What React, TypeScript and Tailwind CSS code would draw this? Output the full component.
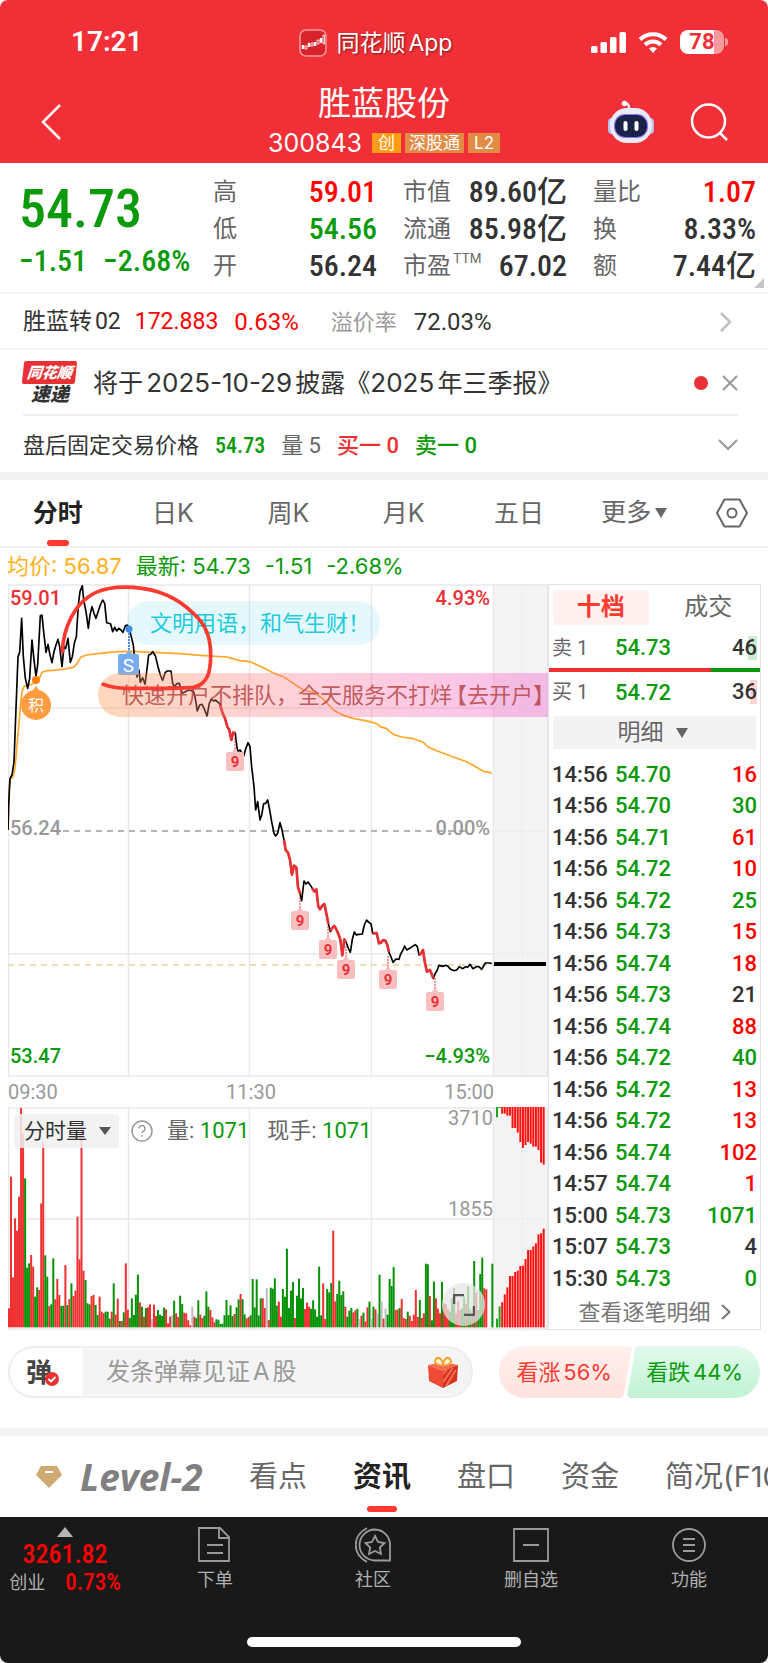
import { ReactNode, useState } from "react";

type Tick = {
  time: string;
  price: string;
  volume: string;
  color: string;
};

type Bar = {
  x: number;
  top: number;
  fill: string;
};

const RED = "text-[#ff0000]";
const GREEN = "text-[#0a9a0a]";
const DARK = "text-[#333333]";

const ticks: Tick[] = [
  { time: "14:56", price: "54.70", volume: "16", color: RED },
  { time: "14:56", price: "54.70", volume: "30", color: GREEN },
  { time: "14:56", price: "54.71", volume: "61", color: RED },
  { time: "14:56", price: "54.72", volume: "10", color: RED },
  { time: "14:56", price: "54.72", volume: "25", color: GREEN },
  { time: "14:56", price: "54.73", volume: "15", color: RED },
  { time: "14:56", price: "54.74", volume: "18", color: RED },
  { time: "14:56", price: "54.73", volume: "21", color: DARK },
  { time: "14:56", price: "54.74", volume: "88", color: RED },
  { time: "14:56", price: "54.72", volume: "40", color: GREEN },
  { time: "14:56", price: "54.72", volume: "13", color: RED },
  { time: "14:56", price: "54.72", volume: "13", color: RED },
  { time: "14:56", price: "54.74", volume: "102", color: RED },
  { time: "14:57", price: "54.74", volume: "1", color: RED },
  { time: "15:00", price: "54.73", volume: "1071", color: GREEN },
  { time: "15:07", price: "54.73", volume: "4", color: DARK },
  { time: "15:30", price: "54.73", volume: "0", color: GREEN },
];

const stats = [
  [
    { label: "高", value: "59.01", color: RED },
    { label: "低", value: "54.56", color: GREEN },
    { label: "开", value: "56.24", color: DARK },
  ],
  [
    { label: "市值", value: "89.60亿", color: DARK },
    { label: "流通", value: "85.98亿", color: DARK },
    { label: "市盈", note: "TTM", value: "67.02", color: DARK },
  ],
  [
    { label: "量比", value: "1.07", color: RED },
    { label: "换", value: "8.33%", color: DARK },
    { label: "额", value: "7.44亿", color: DARK },
  ],
];

const PRICE_LINE =
  "24,765 26,690 30,610 36,600 42,560 48,400 54,245 59,232 65,130 70,245 76,310 83,340 89,310 96,195 101,245 108,305 113,270 121,122 126,120 131,170 138,232 144,208 150,240 156,263 162,230 168,210 174,193 179,215 186,275 192,215 197,220 204,190 211,262 217,245 223,205 229,185 235,90 240,50 247,32 251,75 258,110 265,160 270,120 276,95 282,115 288,130 296,105 301,90 308,75 314,85 320,143 326,145 332,147 338,170 344,157 350,168 357,160 363,165 369,172 376,152 382,150 388,160 395,190 400,210 404,255 408,290 411,306 417,285 421,322 428,308 435,328 440,290 446,240 452,238 458,230 466,242 474,275 481,300 488,316 496,292 502,288 513,288 518,325 523,335 530,326 538,325 546,355 556,350 566,345 580,348 585,365 592,408 599,390 606,388 613,402 621,423 628,385 634,372 640,378 646,375 658,385 668,415 675,430 682,455 688,465 694,495 700,472 706,475 708,495 713,530 720,525 731,543 737,522 744,503 750,515 755,575 762,635 767,705 773,680 780,735 785,720 791,686 797,685 803,675 809,705 815,740 822,775 827,783 833,775 840,743 846,765 852,795 857,825 864,833 870,855 876,899 882,872 889,877 894,937 901,960 905,977 912,918 918,927 924,921 932,932 937,940 943,950 949,943 955,995 960,1003 966,993 973,987 979,1015 986,1050 991,1070 997,1058 1003,1053 1009,1063 1015,1077 1021,1093 1027,1141 1033,1093 1039,1103 1045,1120 1051,1132 1057,1093 1063,1071 1069,1080 1076,1078 1087,1077 1093,1050 1100,1035 1106,1042 1113,1046 1118,1075 1124,1075 1130,1074 1137,1105 1143,1103 1149,1095 1156,1097 1162,1110 1167,1133 1172,1143 1179,1162 1188,1152 1197,1153 1202,1137 1208,1127 1214,1113 1220,1125 1232,1118 1246,1109 1252,1115 1257,1140 1263,1135 1269,1125 1275,1165 1281,1190 1290,1185 1300,1210 1306,1195 1312,1185 1317,1171 1327,1174 1337,1171 1344,1174 1352,1183 1362,1187 1370,1185 1378,1175 1387,1181 1397,1175 1403,1177 1410,1168 1419,1181 1429,1175 1437,1175 1445,1183 1456,1164 1466,1164 1475,1165";

// runs of nine falling minutes, drawn over the price line
const NINE_RUNS = [
  "660,388 668,415 675,430 682,455 688,465 694,495 700,472 706,475",
  "852,795 857,825 864,833 870,855 876,899 882,872 889,877 894,937 901,957",
  "937,940 943,950 949,943 955,995 960,1003 966,993 973,987 979,1015 985,1046",
  "991,1068 997,1058 1003,1053 1009,1063 1015,1077 1021,1093 1027,1141 1033,1093 1038,1101",
  "1118,1075 1130,1074 1137,1105 1143,1103 1149,1095 1156,1097 1162,1110 1167,1130",
  "1257,1140 1263,1135 1269,1125 1275,1165 1281,1190 1290,1185 1300,1210",
];

const AVERAGE_LINE =
  "24,765 27,640 32,610 38,608 45,580 52,500 58,430 66,350 72,334 90,330 108,322 118,310 126,292 140,287 160,286 195,282 220,277 232,265 242,247 260,240 300,235 350,230 400,229 460,232 540,236 600,241 680,246 720,257 750,260 790,278 825,296 850,305 880,325 910,345 940,352 970,372 1000,405 1030,421 1060,430 1110,440 1132,447 1140,455 1160,461 1180,478 1205,486 1240,491 1270,502 1285,516 1310,527 1360,546 1400,560 1430,577 1450,589 1470,592 1475,596";

const nineMarkers = [
  { x: 227, y: 168 },
  { x: 292, y: 327 },
  { x: 320, y: 356 },
  { x: 338, y: 376 },
  { x: 380, y: 386 },
  { x: 427, y: 408 },
];

const VOLUME =
  "685r 290r 592r 415r 452r 350r 84r 160r 295g 563g 550g 525r 560r 650g 622g 630r 370r 185r 526g 590g 678r 673g 535g 658r 597r 645r 678g 677g 555r 675g 657r 610g 648r 632r 410r 538r 135r 572r 600g 670g 673g 648r 645r 675g 705g 650r 695r 700r 695g 695g 716g 695r 610g 704r 656r 723g 723r 697g 550r 689r 714g 655g 705g 644g 584g 667r 680g 710r 684g 682r 673r 717n 674r 708r 690g 704g 708g 683g 688r 730r 710r 706n 662g 700r 711r 647g 672g 698r 700r 721r 736r 680n 710r 714g 661g 704r 714r 707g 634g 680g 690r 712r 727r 718g 719g 732g 731g 706g 660g 705g 676g 708g 702r 682g 658g 642r 658g 703g 715r 711r 706g 597g 682g 598g 706g 655g 655r 684r 625n 720r 623g 626g 595g 677g 665r 710r 627g 650g 506g 684g 632g 606g 714r 647g 596g 655g 624g 687r 668r 680r 686g 661g 688g 710g 560g 706g 610r 717r 627g 637g 609g 452r 664r 642g 602g 645g 634g 680r 710g 692g 684g 697r 691r 686g 717n 707r 698g 724r 682r 665g 717n 680g 688r 700n 584g 664n 716r 686n 704g 597g 618g 561g 690r 688r 684g 657r 714r 717r 695g 707r 723r 704r 630r 711r 660g 714r 700r 551g 553g 648r 721g 605g 655r 686r 700r 606g 670r 672r 688r 695g 655g 624g 700r 664r 690r 685g 650g 672r 620g 688g 700r 543g 638r 690g 582g 533g 625r 628r 742r 742r 551g";

const ASK_DEPTH = "112g 84g 101r 101r 107r 107r 144r 144r 158r 186r 204r 195r 186r 191r 200r 200r 210r 248r 254r";
const BID_DEPTH = "716g 679g 667r 643r 622r 588r 588r 576r 572r 558r 557r 537r 510r 510r 499r 490r 463r 460r 446r";

const parseBars = (source: string, from: number, to: number, fills: Record<string, string>): Bar[] => {
  const items = source.split(" ");
  const step = (to - from) / (items.length - 1);
  return items.map((item, index) => ({
    x: from + index * step,
    top: parseInt(item, 10),
    fill: fills[item.slice(-1)],
  }));
};

const volumeFills = { r: "#ee3030", g: "#069206", n: "#bdbdbd" };
const depthFills = { r: "#ff0f0f", g: "#1ba51b" };
const volumeBars = parseBars(VOLUME, 27, 1477, volumeFills);
const askBars = parseBars(ASK_DEPTH, 1491, 1631, depthFills);
const bidBars = parseBars(BID_DEPTH, 1491, 1631, depthFills);

const DIN = "[font-family:'Roboto_Condensed','Liberation_Sans_Narrow',Roboto,'Noto_Sans_CJK_SC',sans-serif]";
const NUM = "[font-family:Roboto,'Noto_Sans_CJK_SC',sans-serif]";

const StatusBar = () => (
  <div className="flex h-20 items-center justify-between pl-[71px] pr-10 pt-1 text-white">
    <div className={`w-[89px] text-[28px] font-semibold leading-8 ${NUM}`}>17:21</div>
    <div className="flex items-center gap-2.5 pt-px">
      <svg className="h-7 w-7" viewBox="0 0 28 28" fill="none">
        <rect x="1" y="1" width="26" height="26" rx="6" fill="#d9232b" stroke="#f79a9d" strokeWidth="1.5" />
        <path d="M4 16v4M10 14v4M16 13v4M22 9v5" stroke="#fff" strokeWidth="2.5" />
        <path d="M6 17h2v3H6zM12 14h2v3h-2zM18 11h2v4h-2zM24 6h1.500v9H24z" stroke="#fff" strokeWidth="0.8" />
      </svg>
      <span className="text-[23px] leading-8 [text-shadow:1px_1px_2px_rgba(0,0,0,0.5)]">同花顺App</span>
    </div>
    <div className="flex items-center gap-3">
      <svg className="h-6 w-[35px]" viewBox="0 0 35 24" fill="#fff">
        <rect x="0" y="16" width="6.500" height="7" rx="1.500" />
        <rect x="9.500" y="12" width="6.500" height="11" rx="1.500" />
        <rect x="19" y="7" width="6.500" height="16" rx="1.500" />
        <rect x="28.500" y="2" width="6.500" height="21" rx="1.500" />
      </svg>
      <svg className="h-6 w-[30px]" viewBox="0 0 30 24" fill="none" stroke="#fff" strokeWidth="4">
        <path d="M2 9.500a18.500 18.500 0 0 1 26 0" />
        <path d="M7 14.800a11.500 11.500 0 0 1 16 0" />
        <path d="M11 18.500a6 6 0 0 1 8 0L15 23z" fill="#fff" stroke="none" />
      </svg>
      <div className="flex items-center gap-px">
        <div className="flex h-6 w-11 items-center justify-center rounded-lg bg-linear-to-r from-white from-78% to-[#f79a9d] to-78% text-[22px] font-bold leading-6 text-[#f03036] [font-family:Roboto,sans-serif]">
          78
        </div>
        <div className="h-2 w-[3px] rounded-r-full bg-[#f79a9d]" />
      </div>
    </div>
  </div>
);

const RobotIcon = () => (
  <svg className="h-11 w-[46px]" viewBox="0 0 46 44">
    <path d="M21 8C21 4 20 4 16 3" stroke="#dfe3fb" strokeWidth="2.500" fill="none" />
    <circle cx="16.500" cy="3.500" r="2.800" fill="#f4f5ff" />
    <rect x="0" y="18" width="8" height="16" rx="4" fill="#b9c0ee" />
    <rect x="38" y="18" width="8" height="16" rx="4" fill="#b9c0ee" />
    <rect x="2" y="8" width="42" height="35" rx="17" fill="#e9ebfb" />
    <rect x="6" y="14" width="34" height="24" rx="11" fill="#8a78f0" />
    <rect x="7" y="15" width="32" height="22" rx="10" fill="#1b2148" />
    <rect x="15.500" y="21" width="4" height="10" rx="2" fill="#fff" />
    <rect x="26.500" y="21" width="4" height="10" rx="2" fill="#fff" />
  </svg>
);

const TitleBar = () => (
  <div className="flex h-[83px] items-center justify-between pl-10 pr-10 text-white">
    <button aria-label="返回" className="flex w-[120px]">
      <svg className="h-9 w-[22px]" viewBox="0 0 22 36" fill="none" stroke="#fff" strokeWidth="2.500">
        <path d="M20 1 3 18l17 17" />
      </svg>
    </button>
    <div className="flex flex-col items-center gap-1.5">
      <h1 className="text-[33px] leading-9">胜蓝股份</h1>
      <div className="flex items-center gap-1">
        <span className="pr-1.5 text-[25px] leading-8">300843</span>
        <span className="bg-[#ff9a13] px-1.5 text-[17px] leading-5">创</span>
        <span className="bg-[#e28b45] px-1 text-[17px] leading-5">深股通</span>
        <span className="bg-[#e28b45] px-1.5 text-[17px] leading-5">L2</span>
      </div>
    </div>
    <div className="flex w-[120px] items-center justify-between">
      <button aria-label="问财助手">
        <RobotIcon />
      </button>
      <button aria-label="搜索">
        <svg className="h-[38px] w-[38px]" viewBox="0 0 38 38" fill="none" stroke="#fff" strokeWidth="2.500">
          <circle cx="18.500" cy="18" r="16.500" />
          <path d="m30 30 7 7" />
        </svg>
      </button>
    </div>
  </div>
);

const Quote = () => (
  <section className="relative flex h-[131px] border-b-2 border-[#f2f2f2] pl-[19px] pr-3 pt-2.5 [text-autospace:no-autospace]">
    <div className={`flex w-[194px] flex-col font-medium text-[#0a9a0a] ${DIN}`}>
      <div className="pt-1 text-[54px] leading-[64px]">54.73</div>
      <div className="flex gap-4 text-[30px] leading-10">
        <span>−1.51</span>
        <span>−2.68%</span>
      </div>
    </div>
    <div className="grid flex-1 grid-cols-[164px_164px_1fr] gap-x-[26px]">
      {stats.map((column, index) => (
        <dl key={index}>
          {column.map((item) => (
            <div key={item.label} className="flex h-[37px] items-center justify-between">
              <dt className="flex text-2xl text-[#666666]">
                {item.label}
                {"note" in item && <span className="pl-0.5 text-[13px] leading-4">{item.note}</span>}
              </dt>
              <dd className={`text-[30px] font-medium ${item.color} ${DIN}`}>{item.value}</dd>
            </div>
          ))}
        </dl>
      ))}
    </div>
    <svg className="absolute bottom-1 right-1 h-2.5 w-2.5" viewBox="0 0 10 10">
      <path d="M10 0v10H0z" fill="#c4c4c4" />
    </svg>
  </section>
);

const Bond = () => (
  <section className={`flex h-14 items-center border-b-2 border-[#f2f2f2] pl-[23px] pr-9 pt-0.5 text-[23px] ${NUM}`}>
    <span className="text-[#333333]">胜蓝转02</span>
    <span className="pl-3.5 text-[#ff0000]">172.883</span>
    <span className="pl-4 text-2xl text-[#ff0000]">0.63%</span>
    <span className="pl-8 text-[22px] text-[#999999]">溢价率</span>
    <span className="flex-1 pl-[17px] text-2xl text-[#333333]">72.03%</span>
    <svg className="h-5 w-3" viewBox="0 0 12 20" fill="none" stroke="#c0c0c0" strokeWidth="2.500">
      <path d="m1 1 9 9-9 9" />
    </svg>
  </section>
);

const Notice = () => (
  <section className="ml-[23px] mr-[30px] flex h-[66px] items-center border-b-2 border-[#f0f0f0] pt-0.5">
    <div className="flex w-[54px] flex-col items-center font-black italic">
      <span className="-skew-x-6 rounded-xs bg-[#e83035] px-1 text-[15px] leading-[23px] text-white">同花顺</span>
      <span className="text-[19px] leading-[21px] text-[#333333]">速递</span>
    </div>
    <p className="flex-1 pl-4 text-[25px] text-[#333333]">
      将于<span className="text-[26px]">2025-10-29</span>披露《<span className="text-[26px]">2025</span>年三季报》
    </p>
    <span className="mr-3.5 h-3.5 w-3.5 rounded-full bg-[#e83035]" />
    <button aria-label="关闭">
      <svg className="h-4 w-4" viewBox="0 0 16 16" stroke="#999" strokeWidth="2">
        <path d="m1 1 14 14M15 1 1 15" />
      </svg>
    </button>
  </section>
);

const AfterHours = () => (
  <section className={`flex h-14 items-center gap-4 pl-[23px] pr-[30px] pt-0.5 text-[22px] ${NUM}`}>
    <span className="text-[#333333]">盘后固定交易价格</span>
    <span className={`font-medium text-[#0a9a0a] ${DIN}`}>54.73</span>
    <span className="text-[#666666]">量 5</span>
    <span className="font-medium text-[#ee3030]">买一 0</span>
    <span className="flex-1 font-medium text-[#0a9a0a]">卖一 0</span>
    <button aria-label="展开">
      <svg className="h-3 w-5" viewBox="0 0 20 12" fill="none" stroke="#999" strokeWidth="2">
        <path d="m1 1 9 9 9-9" />
      </svg>
    </button>
  </section>
);

const periods = ["分时", "日K", "周K", "月K", "五日"];

const PeriodTabs = () => {
  const [period, setPeriod] = useState("分时");

  return (
    <nav className="flex h-[68px] border-b-2 border-[#f0f0f0] text-[25px] text-[#666666] [text-autospace:no-autospace]">
      {periods.map((p) => (
        <button
          key={p}
          onClick={() => setPeriod(p)}
          className={`flex flex-1 flex-col items-center justify-end ${p === period ? "font-bold text-[#222222]" : ""}`}
        >
          <span className="leading-[54px]">{p}</span>
          <span className={`h-1.5 w-[22px] rounded-full ${p === period ? "bg-[#ff3830]" : ""}`} />
        </button>
      ))}
      <button className="flex flex-1 items-center justify-center gap-1 pr-1">
        更多
        <svg className="h-2.5 w-3" viewBox="0 0 12 10" fill="#666">
          <path d="M0 0h12L6 10z" />
        </svg>
      </button>
      <button aria-label="设置" className="flex w-[72px] items-center justify-center">
        <svg className="h-[30px] w-8" viewBox="0 0 32 30" fill="none" stroke="#666" strokeWidth="2">
          <path d="M8.500 1.500h15L31 15l-7.500 13.500h-15L1 15z" />
          <circle cx="16" cy="15" r="4.500" />
        </svg>
      </button>
    </nav>
  );
};

const PriceChart = () => (
  <div className="relative">
    <svg className={`block h-auto w-full ${NUM}`} viewBox="0 0 540 493" role="img" aria-label="分时走势">
      <rect x="486" y="0" width="54" height="493" fill="#f4f4f4" />
      <path
        d="M0 1H540M0 124H486M0 370H486M0 492H540M0.500 0V493M120.500 0V493M241.500 0V493M363.500 0V493M485.500 0V493M539.500 0V493"
        stroke="#e9e9e9"
        strokeWidth="1.500"
      />
      <path d="M514 0V493M486 124H540M486 370H540" stroke="#e6e6e6" strokeDasharray="2 2" />
      <path d="M486 247H540" stroke="#e9e9e9" />
      <path d="M55 247H457" stroke="#9a9a9a" strokeWidth="1.500" strokeDasharray="6 5" />
      <path d="M0 381H486" stroke="#e9cfa4" strokeWidth="1.500" strokeDasharray="6 5" />
      <svg x="0" y="0" width="540" height="493" viewBox="24 27 1620 1479" fill="none" strokeLinejoin="round">
        <polyline points={AVERAGE_LINE} stroke="#ffa627" strokeWidth="5" />
        <polyline points={PRICE_LINE} stroke="#000" strokeWidth="5" />
        {NINE_RUNS.map((run) => (
          <polyline key={run} points={run} stroke="#e83035" strokeWidth="8" />
        ))}
      </svg>
      <path d="M486 380H538" stroke="#000" strokeWidth="4" />
      <g fontSize="20" fontWeight="500">
        <text x="2" y="21" fill="#e83035">59.01</text>
        <text x="482" y="21" fill="#e83035" textAnchor="end">4.93%</text>
        <text x="2" y="251" fill="#999">56.24</text>
        <text x="482" y="251" fill="#999" textAnchor="end">0.00%</text>
        <text x="2" y="479" fill="#0a9a0a">53.47</text>
        <text x="482" y="479" fill="#0a9a0a" textAnchor="end">−4.93%</text>
      </g>
      {nineMarkers.map((m) => (
        <g key={m.x}>
          <path d={`M${m.x} ${m.y - 14}V${m.y - 3}`} stroke="#ee3030" strokeDasharray="2 1" />
          <path d={`m${m.x} ${m.y - 4} 4 5h-8z`} fill="#f9bfc0" />
          <rect x={m.x - 9} y={m.y} width="18" height="19" rx="2" fill="#f9bfc0" />
          <text x={m.x} y={m.y + 15} fill="#e83035" fontSize="15" fontWeight="700" textAnchor="middle">9</text>
        </g>
      ))}
      <g>
        <circle cx="28" cy="96" r="4" fill="#ff7f0e" />
        <path d="m28 102 5 7H23z" fill="#ff9c40" />
        <circle cx="28" cy="121" r="15" fill="#ff9c40" />
        <text x="28" y="127" fill="#fff" fontSize="16" textAnchor="middle">积</text>
      </g>
      <g>
        <path d="M121 46V67" stroke="#4a8fe8" strokeWidth="2" strokeDasharray="2 1" />
        <circle cx="121" cy="45" r="3.500" fill="#3c86e8" />
        <path d="m121 66 4 5h-8z" fill="#78acf0" />
        <rect x="110" y="70" width="21" height="21" rx="2" fill="#78acf0" />
        <text x="120.500" y="88" fill="#fff" fontSize="19" textAnchor="middle">S</text>
      </g>
    </svg>
    <div className="absolute left-[119px] top-[17px] rounded-full bg-[#4fd8ea]/15 pl-[23px] pr-2.5 text-[22px] leading-[44px] text-[#1ccbdc]">
      文明用语，和气生财！
    </div>
    <div className="absolute left-[90px] right-0 top-[89px] whitespace-nowrap rounded-l-full bg-linear-to-r from-[#ff9b55]/40 via-[#fb5f8a]/30 to-[#f04cc8]/35 pl-6 text-[22px] leading-[44px] text-[#b23c39]/80">
      快速开户不排队，全天服务不打烊
      <span className="ml-1 [font-feature-settings:'halt']">【去开户】</span>
    </div>
    <svg className="absolute inset-0 h-full w-full" viewBox="24 27 1620 1479" fill="none">
      <path
        d="M187 230C190 150 230 90 262 68C300 38 350 35 400 37C480 42 540 75 580 115C620 150 632 190 632 240C632 290 624 328 580 337C520 342 440 340 380 340C345 340 330 336 309 328"
        stroke="#fb3a30"
        strokeWidth="11"
        strokeLinecap="round"
      />
    </svg>
  </div>
);

const VolumeChart = () => (
  <div className="relative">
    <svg className={`block h-auto w-full ${NUM}`} viewBox="0 0 540 223" role="img" aria-label="分时量">
      <rect x="486" y="0" width="54" height="223" fill="#f4f4f4" />
      <path
        d="M0 1H540M0 112H486M0 222H540M0.500 0V223M120.500 0V223M241.500 0V223M363.500 0V223M485.500 0V223M539.500 0V223"
        stroke="#e9e9e9"
        strokeWidth="1.500"
      />
      <path d="M514 0V223M486 112H540" stroke="#e6e6e6" strokeDasharray="2 2" />
      <svg x="0" y="0" width="540" height="223" viewBox="24 81 1620 669">
        {volumeBars.map((b) => (
          <rect key={b.x} x={b.x - 3} y={b.top} width="6" height={742 - b.top} fill={b.fill} />
        ))}
        {askBars.map((b) => (
          <rect key={b.x} x={b.x - 3} y={81} width="6" height={b.top - 81} fill={b.fill} />
        ))}
        {bidBars.map((b) => (
          <rect key={b.x} x={b.x - 3} y={b.top} width="6" height={742 - b.top} fill={b.fill} />
        ))}
      </svg>
      <g fontSize="20" fill="#999" textAnchor="end">
        <text x="485" y="18">3710</text>
        <text x="485" y="109">1855</text>
      </g>
    </svg>
    <div className={`absolute left-1.5 top-[7px] flex items-center text-[22px] leading-[34px] ${NUM}`}>
      <button className="flex items-center gap-3 rounded-sm bg-[#f0f0f0]/85 pl-2.5 pr-2 text-[21px] text-[#333333]">
        分时量
        <svg className="h-2 w-3" viewBox="0 0 12 8" fill="#555">
          <path d="M0 0h12L6 8z" />
        </svg>
      </button>
      <svg className="ml-3 h-[22px] w-[22px]" viewBox="0 0 22 22" fill="none" stroke="#999" strokeWidth="1.500">
        <circle cx="11" cy="11" r="10" />
        <path d="M8 8.500a3 3 0 1 1 4.500 2.600C11.300 11.800 11 12.200 11 13.300M11 15v1.800" />
      </svg>
      <span className="pl-3.5 text-[#666666]">量: <span className="text-[#0a9a0a]">1071</span></span>
      <span className="pl-[18px] text-[#666666]">现手: <span className="text-[#0a9a0a]">1071</span></span>
    </div>
    <button
      aria-label="全屏"
      className="absolute bottom-1 right-[63px] flex h-[43px] w-[43px] items-center justify-center rounded-full bg-[#e6e6e6]/75"
    >
      <svg className="h-[22px] w-[22px]" viewBox="0 0 22 22" fill="none" stroke="#555" strokeWidth="2.500">
        <path d="M1 10V1h10M21 12v9H11" />
      </svg>
    </button>
  </div>
);

const OrderBook = () => {
  const [tab, setTab] = useState("十档");

  return (
    <section className={`flex w-[213px] shrink-0 flex-col border border-[#e4e4e4] text-[22px] ${NUM}`}>
      <div className="flex gap-3 px-1 pt-[5px]">
        {["十档", "成交"].map((t) => (
          <button
            key={t}
            onClick={() => setTab(t)}
            className={`flex-1 rounded-sm text-2xl leading-[35px] ${t === tab ? "bg-[#fff1f0] font-bold text-[#fb3a30]" : "text-[#666666]"}`}
          >
            {t}
          </button>
        ))}
      </div>
      <div className="flex h-[43px] items-center pl-[3px] pr-[3px] pt-0.5">
        <span className="w-[63px] text-[20px] text-[#666666]">卖 1</span>
        <span className="flex-1 font-medium text-[#0a9a0a]">54.73</span>
        <span className="bg-linear-to-l from-[#cdeccd] to-[#cdeccd] bg-[length:9px_100%] bg-right bg-no-repeat font-medium leading-6 text-[#333333]">46</span>
      </div>
      <div className="flex h-1">
        <div className="w-[77%] bg-[#ee3030]" />
        <div className="flex-1 bg-[#0a9a0a]" />
      </div>
      <div className="flex h-10 items-center pl-[3px] pr-[3px]">
        <span className="w-[63px] text-[20px] text-[#666666]">买 1</span>
        <span className="flex-1 font-medium text-[#0a9a0a]">54.72</span>
        <span className="bg-linear-to-l from-[#ffd2d2] to-[#ffd2d2] bg-[length:7px_100%] bg-right bg-no-repeat font-medium leading-6 text-[#333333]">36</span>
      </div>
      <button className="mx-1 mt-1 flex items-center justify-center gap-3 bg-[#f3f3f3] pr-1 text-[23px] leading-[33px] text-[#666666]">
        明细
        <svg className="h-2.5 w-3" viewBox="0 0 12 10" fill="#666">
          <path d="M0 0h12L6 10z" />
        </svg>
      </button>
      <table className="mt-2.5 h-[536px] w-full table-fixed font-medium">
        <tbody>
          {ticks.map((t, index) => (
            <tr key={index}>
              <td className="w-[66px] p-0 pl-[3px] leading-7 text-[#333333]">{t.time}</td>
              <td className="w-[70px] p-0 leading-7 text-[#0a9a0a]">{t.price}</td>
              <td className={`p-0 pr-[3px] text-right leading-7 ${t.color}`}>{t.volume}</td>
            </tr>
          ))}
        </tbody>
      </table>
      <button className="flex flex-1 items-center justify-center gap-2.5 text-[#777777]">
        查看逐笔明细
        <svg className="h-4 w-2.5" viewBox="0 0 10 16" fill="none" stroke="#777" strokeWidth="2">
          <path d="m1 1 7.500 7L1 15" />
        </svg>
      </button>
    </section>
  );
};

const GiftIcon = () => (
  <svg className="h-8 w-8" viewBox="0 0 32 32">
    <path d="m1 9 15-3 15 3-15 6z" fill="#f56a4a" />
    <path d="m1 9 15 6v17L2 25z" fill="#ef4a34" />
    <path d="m31 9-15 6v17l14-7z" fill="#d9331f" />
    <path d="m19 30 10-16M16 26l10-14M16 18l4-4" stroke="#f7795c" strokeWidth="1.500" />
    <path d="M16 9C10 10 6 6 9 3s7 1 7 6c0-5 4-9 7-6s-1 7-7 6z" fill="#fff3d0" stroke="#f2a43a" strokeWidth="2" />
  </svg>
);

const CommentBar = () => (
  <section className="flex h-[98px] items-start justify-between px-2 pt-4">
    <div className="flex h-[52px] w-[465px] items-center overflow-hidden rounded-full border-2 border-[#eeeeee] bg-[#f4f4f4]">
      <button className="relative flex h-full w-[73px] items-center bg-white pl-4 text-[26px] font-bold text-[#444444]">
        弹
        <svg className="absolute bottom-2.5 left-[35px] h-3.5 w-3.5" viewBox="0 0 14 14">
          <circle cx="7" cy="7" r="7" fill="#ee3030" />
          <path d="m3.500 7 2.500 2.500 4.500-4.500" fill="none" stroke="#fff" strokeWidth="1.800" />
        </svg>
      </button>
      <input
        aria-label="发条弹幕"
        placeholder="发条弹幕见证A股"
        className="min-w-0 flex-1 pl-[23px] text-2xl text-[#333333] outline-none placeholder:text-[#999999]"
      />
      <button aria-label="礼物" className="pr-3">
        <GiftIcon />
      </button>
    </div>
    <div className="relative flex h-[52px] w-[261px] text-[22px]">
      <svg className="absolute inset-0 h-full w-full" viewBox="0 0 261 52" preserveAspectRatio="none">
        <defs>
          <linearGradient id="up" x2="0" y2="1">
            <stop stopColor="#fff0ee" />
            <stop offset="1" stopColor="#ffe3df" />
          </linearGradient>
          <linearGradient id="down" x2="0" y2="1">
            <stop stopColor="#e2faec" />
            <stop offset="1" stopColor="#bff3d3" />
          </linearGradient>
        </defs>
        <path d="M26 0H129q4 0 3.500 4L125 48q-1 4-5 4H26a26 26 0 0 1 0-52z" fill="url(#up)" />
        <path d="M140 0H235a26 26 0 0 1 0 52H132q-4 0-3.500-4L136 4q1-4 4-4z" fill="url(#down)" />
      </svg>
      <button className="relative flex-1 text-[#fb3a30]">看涨56%</button>
      <button className="relative flex-1 text-[#0a9a0a]">看跌44%</button>
    </div>
  </section>
);

const sections = ["看点", "资讯", "盘口", "资金", "简况(F10)"];

const SectionTabs = () => {
  const [section, setSection] = useState("资讯");

  return (
    <nav className="flex h-[81px] gap-[46px] overflow-hidden whitespace-nowrap pl-9 text-[29px] text-[#666666]">
      <button className="flex w-[167px] shrink-0 items-center gap-[18px] text-[37px] font-bold italic text-[#808080] [font-family:'Open_Sans',sans-serif]">
        <svg className="h-[23px] w-[26px] shrink-0" viewBox="0 0 26 23">
          <path d="M5 1h16l5 9-13 13L0 10z" fill="#cfab73" />
          <path d="M9 7h8" stroke="#fff" strokeWidth="2" />
        </svg>
        Level-2
      </button>
      {sections.map((s) => (
        <button
          key={s}
          onClick={() => setSection(s)}
          className={`flex shrink-0 flex-col items-center gap-1 pt-4 ${s === section ? "font-bold text-[#222222]" : ""}`}
        >
          <span className="leading-[50px]">{s}</span>
          <span className={`h-1.5 w-[30px] rounded-full ${s === section ? "bg-[#ff3830]" : ""}`} />
        </button>
      ))}
    </nav>
  );
};

const FooterItem = ({ label, children }: { label: string; children: ReactNode }) => (
  <button className="flex flex-1 flex-col items-center gap-[3px] pt-2.5 text-lg leading-7 text-[#b0b0b0]">
    <svg className="h-9 w-9" viewBox="0 0 36 36" fill="none" stroke="#9a9a9a" strokeWidth="1.800">
      {children}
    </svg>
    {label}
  </button>
);

const Footer = () => (
  <footer className="flex h-[146px] flex-col items-center justify-between rounded-b-lg bg-[#191919] pb-4">
    <div className="flex w-full">
      <div className={`flex w-[136px] flex-col items-center pr-1.5 pt-2.5 font-medium text-[#ff0000] ${DIN}`}>
        <svg className="h-2.5 w-4" viewBox="0 0 16 10" fill="#b5b5b5">
          <path d="M8 0l8 10H0z" />
        </svg>
        <span className="text-[26px] leading-[34px]">3261.82</span>
        <div className="flex items-center gap-5 text-[23px] leading-6">
          <span className="text-lg font-normal leading-6 text-[#b0b0b0]">创业</span>
          0.73%
        </div>
      </div>
      <FooterItem label="下单">
        <path d="M2 1h21l9 9v24H2zM22 1v10h10M10 18h16M10 26h16" />
      </FooterItem>
      <FooterItem label="社区">
        <path d="M12 1C-3 9-3 27 12 35M20 2.500a15.500 15.500 0 0 0 0 31h15V18A15.500 15.500 0 0 0 20 2.500z" />
        <path d="m20 9 3 6 6.500 1-4.700 4.500 1.200 6.500-6-3-6 3 1.200-6.500-4.700-4.500 6.500-1z" />
      </FooterItem>
      <FooterItem label="删自选">
        <path d="M1 2h34v32H1zM10 18h16" />
      </FooterItem>
      <FooterItem label="功能">
        <circle cx="18" cy="18" r="16" />
        <path d="M12 12h12M12 18h12M12 24h12" />
      </FooterItem>
    </div>
    <div className="h-2.5 w-[274px] rounded-full bg-white" />
  </footer>
);

const App = () => {
  return (
    <div className="bg-white leading-normal [font-family:Inter,'Noto_Sans_CJK_SC',sans-serif] [text-autospace:normal]">
      <header className="rounded-t-lg bg-[#f03036]">
        <StatusBar />
        <TitleBar />
      </header>
      <Quote />
      <Bond />
      <Notice />
      <AfterHours />
      <div className="h-2 bg-[#f3f3f3]" />
      <PeriodTabs />
      <div className="flex h-9 items-center gap-3.5 pl-[7px] text-[22px]">
        <span className="text-[#ffb020]">均价: 56.87</span>
        <span className="text-[#0a9a0a]">最新: 54.73</span>
        <span className="text-[#0a9a0a]">-1.51</span>
        <span className="text-[#0a9a0a]">-2.68%</span>
      </div>
      <main className="flex pl-2 pr-[7px]">
        <div className="min-w-0 flex-1">
          <PriceChart />
          <div className={`flex h-[30px] items-center justify-between pr-[54px] text-[20px] text-[#999999] ${NUM}`}>
            <span>09:30</span>
            <span>11:30</span>
            <span>15:00</span>
          </div>
          <VolumeChart />
        </div>
        <OrderBook />
      </main>
      <CommentBar />
      <div className="h-2 bg-[#f3f3f3]" />
      <SectionTabs />
      <Footer />
    </div>
  );
};

export default App;
